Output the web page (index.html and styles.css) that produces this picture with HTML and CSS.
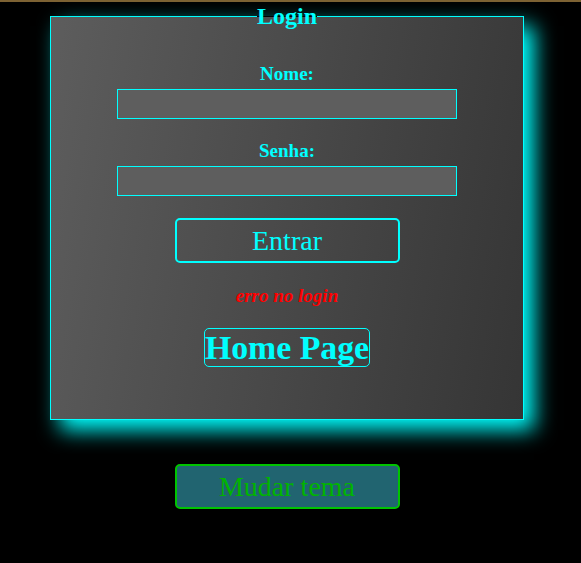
FILE: index.html
```html
<!DOCTYPE html>
<html lang="pt-BR">
<head>
  <meta charset="UTF-8" />
  <meta name="viewport" content="width=device-width, initial-scale=1.0"/>
  <title>Login</title>
  <link rel="stylesheet" href="styles.css">
</head>

<body>
  <div class="page">
    <fieldset class="login-box">
      <legend>Login</legend>
      <form class="login-form" id="loginForm">
        <label for="nome">Nome:</label>
        <input type="text" id="nome" name="nome" />
        <label for="senha">Senha:</label>
        <input type="password" id="senha" name="senha" />
        <button type="submit" class="btn-entrar">Entrar</button>
      </form>
      <p class="erro">erro no login</p>
      <a href="#" class="home-link">Home Page</a>
    </fieldset>

    <!-- botão de trocar tema -->
    <button type="button" class="btn-tema">Mudar tema</button>
  </div>
</body>
</html>
```

FILE: styles.css
```css
/* Tema escuro com destaque ciano */
body {
  margin: 0;
  padding: 0;
  background: #000;
  border-top: 2px solid #7d6233;
  font-family: "Liberation Serif", "Times New Roman", serif;
  min-height: 561px;
}

.page {
  width: 474px;
  margin-left: 50px;
  display: flex;
  flex-direction: column;
  align-items: center;
}

/* Caixa do login */
.login-box {
  box-sizing: border-box;
  width: 474px;
  margin: 1px 0 0;
  padding: 0 0 52px;
  border: 1px solid #0ff;
  background: linear-gradient(100deg, #5d5d5d, #353535);
  box-shadow: 10px 10px 20px #0ff;
  display: flex;
  flex-direction: column;
  align-items: center;
}

.login-box legend {
  margin: 0 auto;
  padding: 0;
  color: #0ff;
  font-size: 24px;
  font-weight: bold;
}

.login-form {
  display: flex;
  flex-direction: column;
  align-items: center;
  width: 100%;
}

.login-form label {
  color: #0ff;
  font-size: 19px;
  font-weight: bold;
  line-height: 20px;
  margin-top: 22px;
}
.login-form label:first-child {
  margin-top: 34px;
}

.login-form input {
  box-sizing: border-box;
  width: 340px;
  height: 30px;
  margin-top: 5px;
  border: 1px solid #0ff;
  background: #5e5e5e;
  color: #0ff;
  outline: none;
}

.btn-entrar,
.btn-tema {
  box-sizing: border-box;
  width: 225px;
  height: 45px;
  font-family: inherit;
  font-size: 28px;
  border-radius: 5px;
  cursor: pointer;
}

.btn-entrar {
  margin-top: 22px;
  background: transparent;
  color: #0ff;
  border: 2px solid #0ff;
}

/* Mensagem de erro */
.erro {
  margin: 22px 0 0;
  color: #f00;
  font-style: italic;
  font-weight: bold;
  font-size: 19px;
  line-height: 22px;
}

.home-link {
  margin-top: 21px;
  color: #0ff;
  font-size: 33.8px;
  font-weight: bold;
  line-height: 37px;
  text-decoration: none;
  border: 1px solid #0ff;
  border-radius: 5px;
}

.btn-tema {
  margin-top: 44px;
  background: #216470;
  color: #00b400;
  border: 2px solid #00c400;
}
```
